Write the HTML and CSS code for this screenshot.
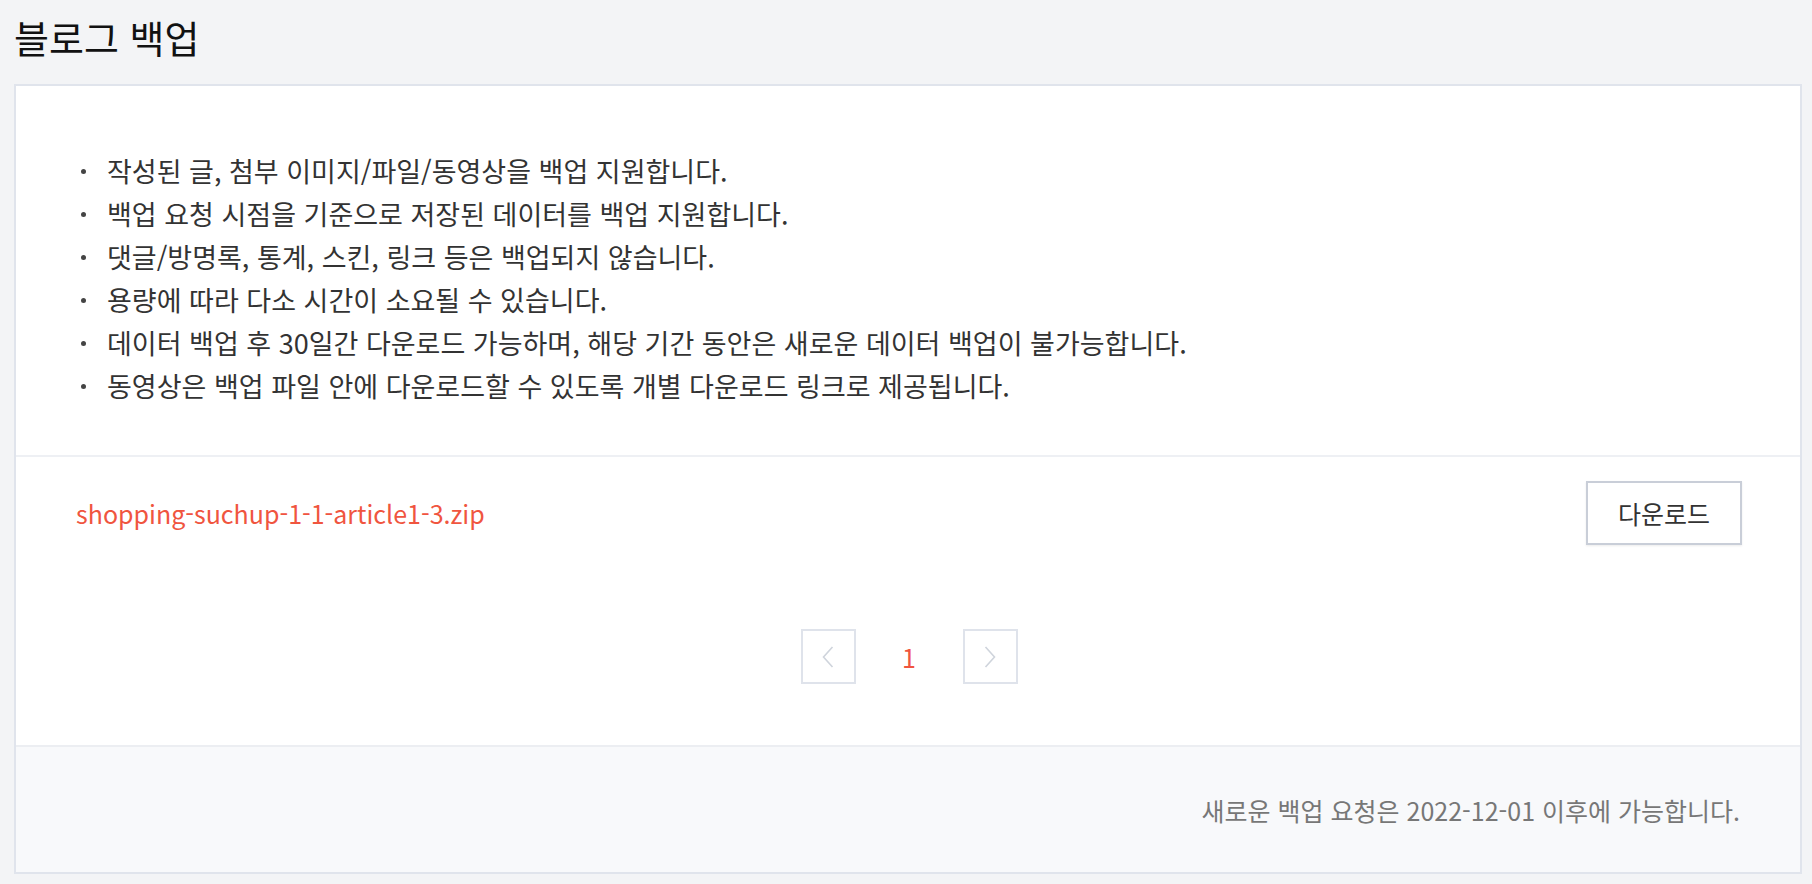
FILE: index.html
```html
<!DOCTYPE html>
<html lang="ko">
<head>
<meta charset="utf-8">
<title>블로그 백업</title>
<link rel="stylesheet" href="styles.css">
</head>
<body>
<h1 class="page-title">블로그 백업</h1>
<div class="card">
  <section class="notice">
    <ul class="notice-list">
      <li>작성된 글, 첨부 이미지/파일/동영상을 백업 지원합니다.</li>
      <li>백업 요청 시점을 기준으로 저장된 데이터를 백업 지원합니다.</li>
      <li>댓글/방명록, 통계, 스킨, 링크 등은 백업되지 않습니다.</li>
      <li>용량에 따라 다소 시간이 소요될 수 있습니다.</li>
      <li>데이터 백업 후 30일간 다운로드 가능하며, 해당 기간 동안은 새로운 데이터 백업이 불가능합니다.</li>
      <li>동영상은 백업 파일 안에 다운로드할 수 있도록 개별 다운로드 링크로 제공됩니다.</li>
    </ul>
  </section>
  <section class="files">
    <div class="file-row">
      <a class="file-name" href="#">shopping-suchup-1-1-article1-3.zip</a>
      <button class="btn-download" type="button">다운로드</button>
    </div>
    <nav class="pager">
      <span class="pager-btn">
        <svg width="12" height="22" viewBox="0 0 12 22"><path d="M10.5 1 L1.5 11 L10.5 21" fill="none" stroke="#cfd4dc" stroke-width="1.6"/></svg>
      </span>
      <span class="pager-num">1</span>
      <span class="pager-btn">
        <svg width="12" height="22" viewBox="0 0 12 22"><path d="M1.5 1 L10.5 11 L1.5 21" fill="none" stroke="#cfd4dc" stroke-width="1.6"/></svg>
      </span>
    </nav>
  </section>
  <footer class="card-foot">새로운 백업 요청은 2022-12-01 이후에 가능합니다.</footer>
</div>
</body>
</html>
```
FILE: styles.css
```css
html, body {
  margin: 0;
  padding: 0;
}
body {
  background: #f3f4f6;
  padding: 0 10px 0 14px;
  font-family: "Noto Sans CJK KR", "Noto Sans", sans-serif;
  color: #333;
}
.page-title {
  margin: 0;
  padding-top: 13px;
  height: 84px;
  line-height: 48px;
  font-size: 38px;
  font-weight: 400;
  color: #111;
  box-sizing: border-box;
}
.card {
  border: 2px solid #e0e4ec;
  background: #fff;
}
.notice {
  padding: 63px 60px 48px 60px;
  border-bottom: 2px solid #eef0f4;
}
.notice-list {
  margin: 0;
  padding: 0;
  list-style: none;
}
.notice-list li {
  position: relative;
  padding-left: 31px;
  font-size: 27px;
  line-height: 43px;
  color: #333;
}
.notice-list li::before {
  content: "";
  position: absolute;
  left: 5px;
  top: 20px;
  width: 5px;
  height: 5px;
  border-radius: 50%;
  background: #444;
}
.files {
  padding: 24px 58px 61px 60px;
}
.file-row {
  display: flex;
  align-items: center;
  justify-content: space-between;
}
.file-name {
  font-size: 25px;
  color: #f0553f;
  text-decoration: none;
}
.btn-download {
  width: 156px;
  height: 64px;
  background: #fff;
  border: 2px solid #c9ced8;
  box-shadow: 0 1px 2px rgba(0, 0, 0, 0.08);
  font-family: inherit;
  font-size: 25px;
  color: #333;
  padding: 0;
}
.pager {
  display: flex;
  justify-content: center;
  align-items: center;
  margin-top: 84px;
}
.pager-btn {
  width: 55px;
  height: 55px;
  box-sizing: border-box;
  border: 2px solid #dfe3eb;
  display: flex;
  align-items: center;
  justify-content: center;
}
.pager-num {
  width: 107px;
  text-align: center;
  font-size: 25px;
  color: #f0553f;
}
.card-foot {
  border-top: 2px solid #eceef2;
  background: #f8f9fb;
  height: 125px;
  display: flex;
  align-items: center;
  justify-content: flex-end;
  padding-right: 60px;
  font-size: 25px;
  color: #777;
}
```
